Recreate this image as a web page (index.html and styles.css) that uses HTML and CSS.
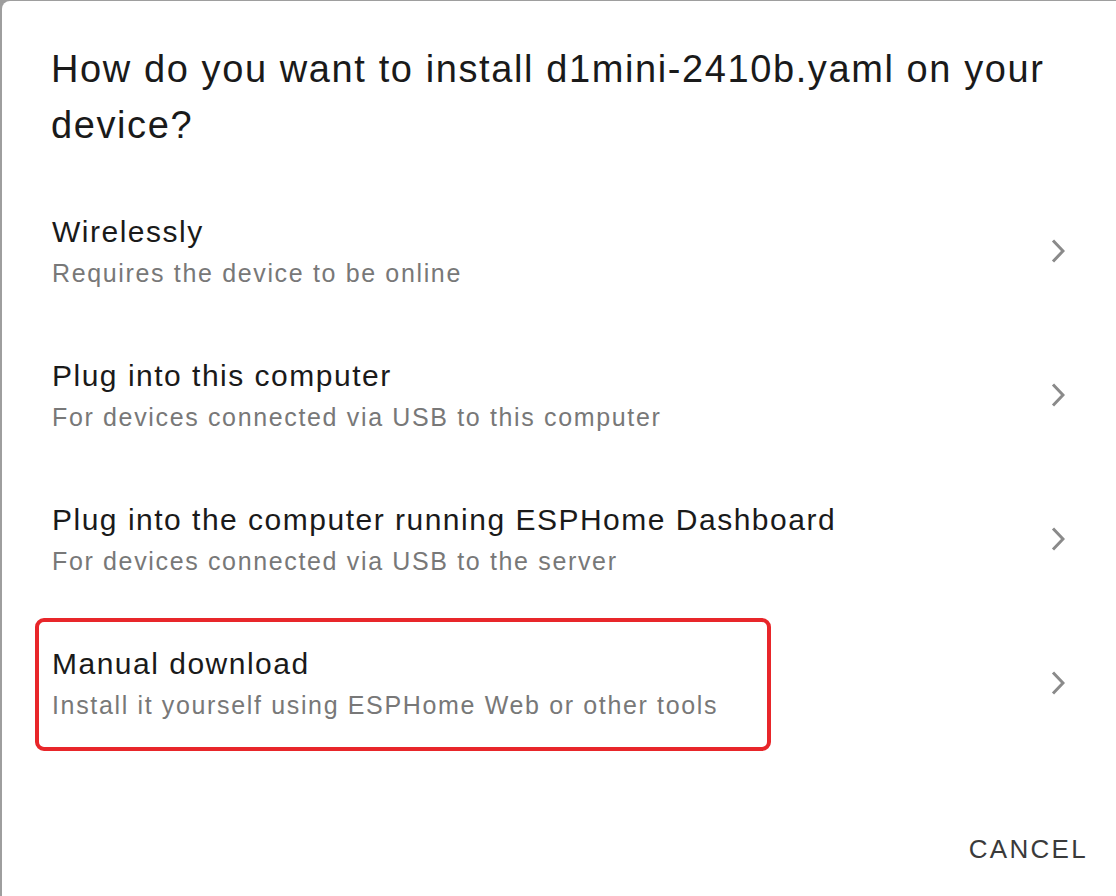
FILE: index.html
```html
<!DOCTYPE html>
<html lang="en">
<head>
<meta charset="utf-8">
<title>Install dialog</title>
<link rel="stylesheet" href="styles.css">
</head>
<body>
<div class="dialog">
  <h2 class="dialog-title">How do you want to install d1mini-2410b.yaml on your device?</h2>
  <ul class="options">
    <li class="option">
      <div class="option-text">
        <div class="option-primary">Wirelessly</div>
        <div class="option-secondary">Requires the device to be online</div>
      </div>
      <svg class="chevron" width="14" height="24" viewBox="0 0 14 24"><path d="M2 1.5 L12 12 L2 22.5" fill="none" stroke="#8a8a8a" stroke-width="3"/></svg>
    </li>
    <li class="option">
      <div class="option-text">
        <div class="option-primary">Plug into this computer</div>
        <div class="option-secondary">For devices connected via USB to this computer</div>
      </div>
      <svg class="chevron" width="14" height="24" viewBox="0 0 14 24"><path d="M2 1.5 L12 12 L2 22.5" fill="none" stroke="#8a8a8a" stroke-width="3"/></svg>
    </li>
    <li class="option">
      <div class="option-text">
        <div class="option-primary">Plug into the computer running ESPHome Dashboard</div>
        <div class="option-secondary">For devices connected via USB to the server</div>
      </div>
      <svg class="chevron" width="14" height="24" viewBox="0 0 14 24"><path d="M2 1.5 L12 12 L2 22.5" fill="none" stroke="#8a8a8a" stroke-width="3"/></svg>
    </li>
    <li class="option option-marked">
      <div class="option-text">
        <div class="option-primary">Manual download</div>
        <div class="option-secondary">Install it yourself using ESPHome Web or other tools</div>
      </div>
      <svg class="chevron" width="14" height="24" viewBox="0 0 14 24"><path d="M2 1.5 L12 12 L2 22.5" fill="none" stroke="#8a8a8a" stroke-width="3"/></svg>
      <div class="highlight"></div>
    </li>
  </ul>
  <div class="actions">
    <button class="btn-cancel">CANCEL</button>
  </div>
</div>
</body>
</html>
```
FILE: styles.css
```css
html, body {
  margin: 0;
  padding: 0;
}
body {
  background: #9e9e9e;
  width: 1116px;
  height: 896px;
  overflow: hidden;
  font-family: "Liberation Sans", Arial, sans-serif;
}
.dialog {
  margin: 1px 0 0 2px;
  width: 1114px;
  min-height: 900px;
  background: #ffffff;
  border-radius: 8px 0 0 0;
  box-sizing: border-box;
  padding-top: 40px;
}
.dialog-title {
  margin: 0;
  padding: 0 30px 0 49px;
  font-size: 38px;
  line-height: 56px;
  font-weight: normal;
  color: #1a1a1a;
  letter-spacing: 1.6px;
}
.options {
  list-style: none;
  margin: 26px 0 0 0;
  padding: 0;
}
.option {
  position: relative;
  height: 144px;
  display: flex;
  align-items: center;
  padding: 0 51px 0 50px;
}
.option-text {
  flex: 1;
}
.option-primary {
  font-size: 30px;
  line-height: 44px;
  color: #1a1a1a;
  letter-spacing: 1.5px;
}
.option-secondary {
  font-size: 25px;
  line-height: 38px;
  color: #787878;
  letter-spacing: 1.65px;
}
.chevron {
  flex: none;
  display: block;
}
.highlight {
  position: absolute;
  left: 33px;
  top: 7px;
  width: 736px;
  height: 133px;
  box-sizing: border-box;
  border: 4px solid #e8262a;
  border-radius: 9px;
  pointer-events: none;
}
.actions {
  display: flex;
  justify-content: flex-end;
  margin-top: 76px;
  padding-right: 30px;
}
.btn-cancel {
  background: none;
  border: none;
  padding: 0;
  font-family: "Liberation Sans", Arial, sans-serif;
  font-size: 26px;
  line-height: 36px;
  letter-spacing: 2.3px;
  color: #3a3a3a;
  margin-right: -2px;
}
```
